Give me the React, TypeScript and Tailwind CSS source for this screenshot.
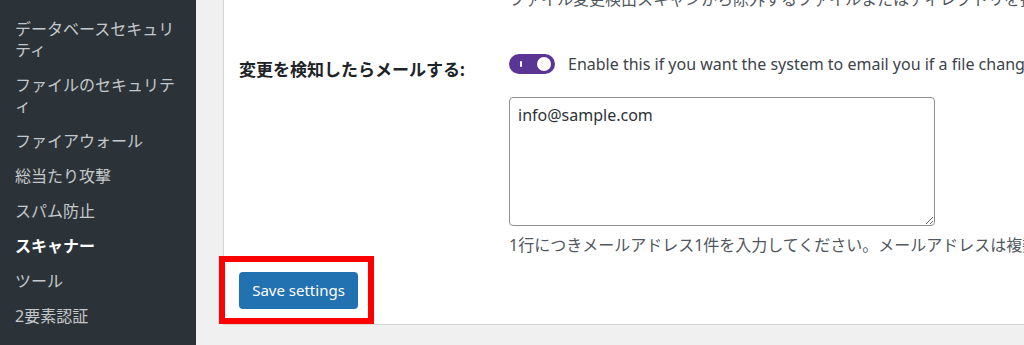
import React from "react"

const menuItems: { label: React.ReactNode; current?: boolean }[] = [
  { label: <>データベースセキュリ<br />ティ</> },
  { label: <>ファイルのセキュリテ<br />ィ</> },
  { label: "ファイアウォール" },
  { label: "総当たり攻撃" },
  { label: "スパム防止" },
  { label: "スキャナー", current: true },
  { label: "ツール" },
  { label: "2要素認証" },
  { label: "Security Check Pro" },
]

function Toggle() {
  return (
    <span className="relative inline-flex h-[20px] w-[46px] shrink-0 items-center rounded-full bg-[#5b3594]">
      {/* on indicator */}
      <span className="absolute left-[11px] top-[7px] h-[6px] w-[2px] rounded-full bg-white" />
      <span className="absolute right-[4px] top-[3px] h-[14px] w-[14px] rounded-full bg-white" />
    </span>
  )
}

export default function App() {
  return (
    <div className="flex h-[345px] w-[1024px] overflow-hidden bg-[#f0f0f1] font-['Noto_Sans','Noto_Sans_CJK_JP',sans-serif]">
      {/* Sidebar */}
      <nav className="w-[196px] shrink-0 bg-[#2c3338] pt-[12px]">
        {menuItems.map((item, i) => (
          <div
            key={i}
            className={`px-[15px] py-[7px] text-[16px] leading-[21px] ${
              item.current ? "font-bold text-white" : "text-[#c5c8cb]"
            }`}
          >
            {item.label}
          </div>
        ))}
      </nav>

      {/* Main */}
      <main className="flex-1 pl-[27px]">
        <div className="border-b border-l border-[#d3d4d6] bg-white pb-[15px] pl-[15px]">
          <p className="-mt-[13px] ml-[270px] whitespace-nowrap text-[16px] leading-[24px] text-[#50575e]">
            ファイル変更検出スキャンから除外するファイルまたはディレクトリを指定してください。
          </p>

          <div className="mt-[41px] flex">
            <div className="w-[270px] shrink-0 pt-[6px] text-[17px] font-bold leading-[24px] text-[#1d2327]">
              変更を検知したらメールする:
            </div>
            <div className="min-w-0 flex-1">
              <div className="flex h-[24px] items-center gap-[13px] whitespace-nowrap text-[16px] text-[#3c434a]">
                <Toggle />
                <span>Enable this if you want the system to email you if a file change is detected.</span>
              </div>
              <textarea
                className="mt-[21px] block h-[129px] w-[426px] rounded-[4px] border border-[#8c8f94] px-[8px] pt-[5px] text-[16px] leading-[24px] text-[#2c3338] outline-none"
                defaultValue="info@sample.com"
              />
              <p className="mt-[7px] whitespace-nowrap text-[16px] leading-[24px] text-[#50575e]">
                1行につきメールアドレス1件を入力してください。メールアドレスは複数入力できます。
              </p>
            </div>
          </div>

          <div className="relative mt-[15px] w-fit">
            <button className="h-[37px] w-[119px] rounded-[4px] bg-[#2271b1] text-[15px] text-white">
              Save settings
            </button>
            {/* annotation box */}
            <div className="pointer-events-none absolute -left-[20px] -top-[16px] h-[68px] w-[155px] border-[6px] border-[#ff0000]" />
          </div>
        </div>
      </main>
    </div>
  )
}
